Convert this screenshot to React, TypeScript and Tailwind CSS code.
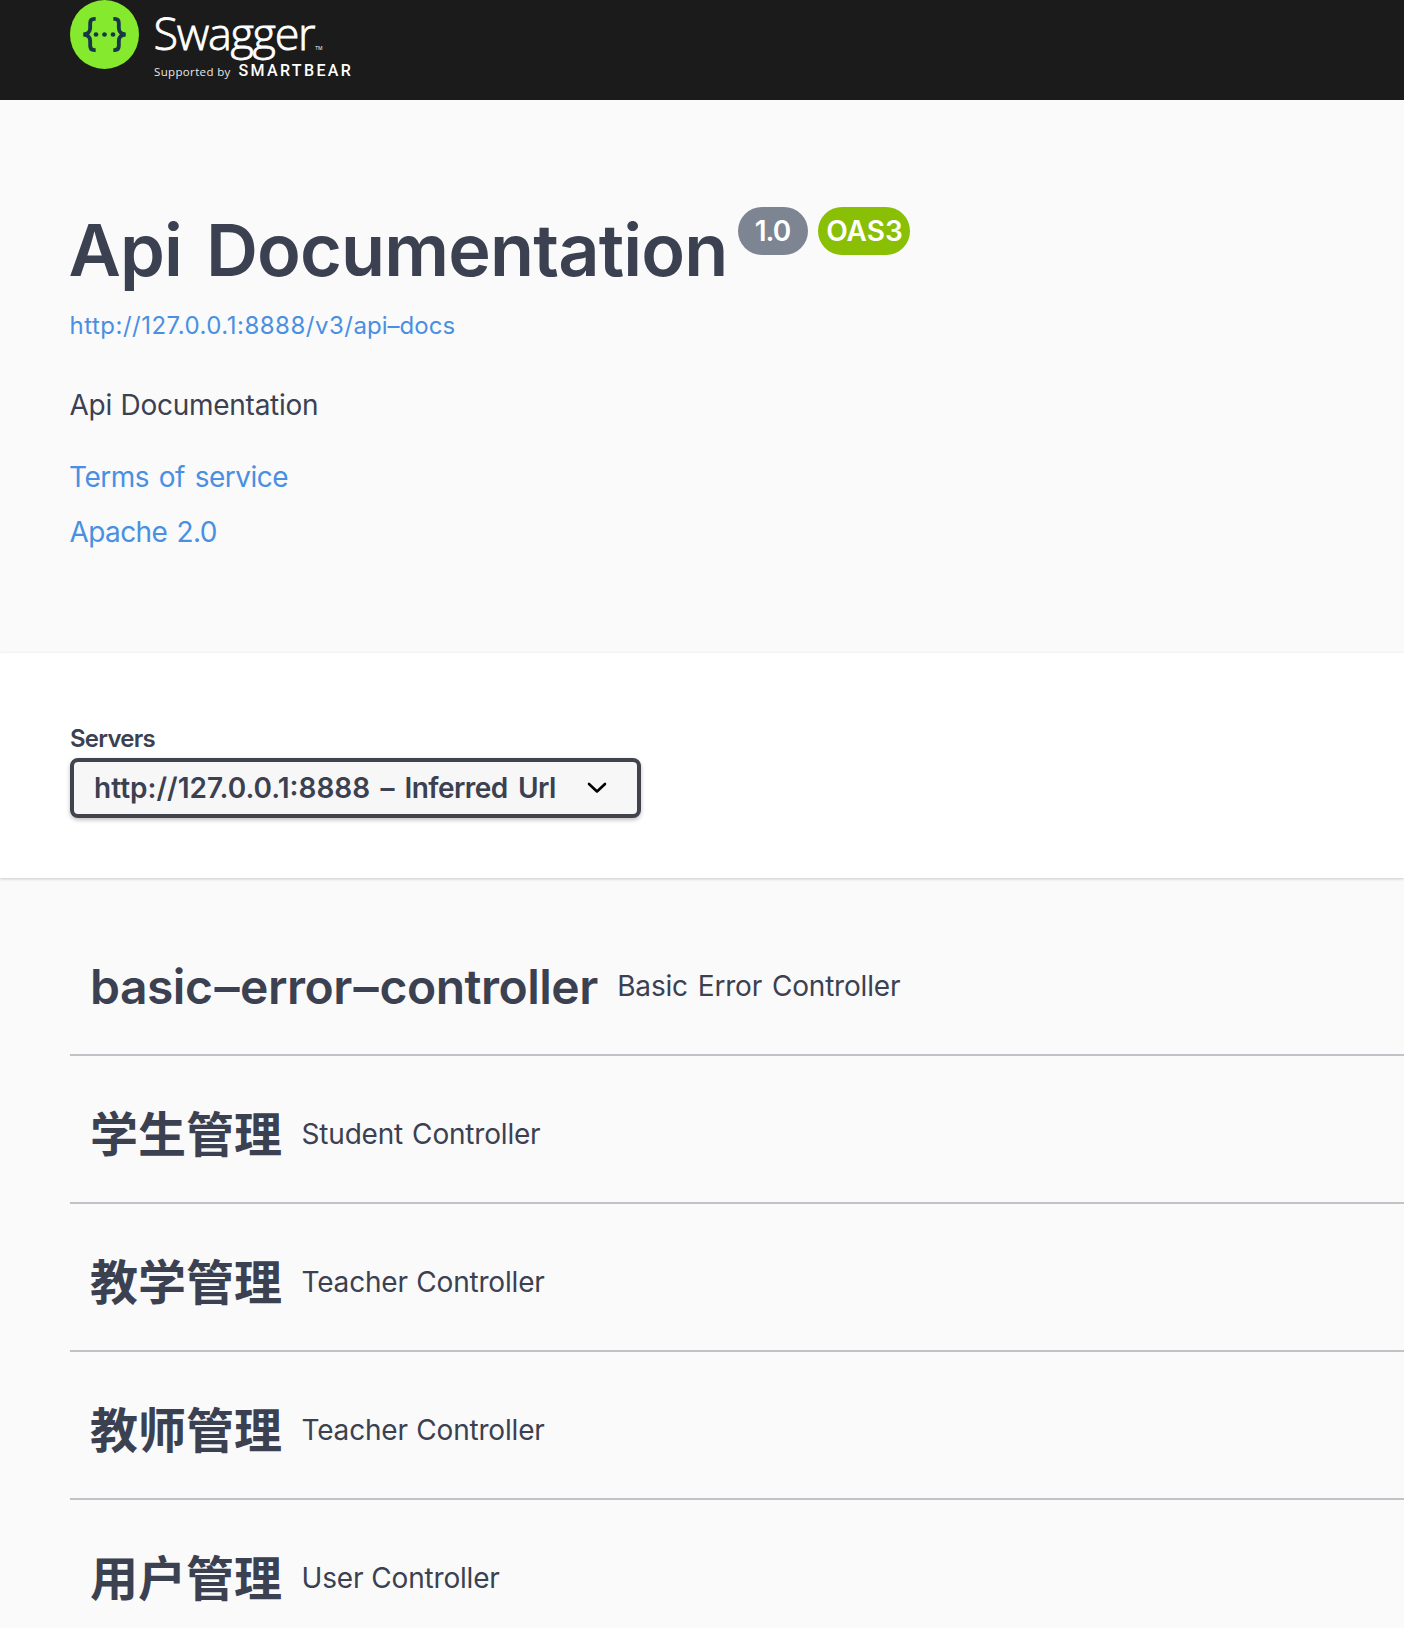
import React from "react";

const tags = [
  { name: "basic–error–controller", description: "Basic Error Controller", nameStyle: "pt-[2px] tracking-[-0.5px]", wordSpacing: "[word-spacing:2.2px]" },
  { name: "学生管理", description: "Student Controller", nameStyle: "pt-[1px]", wordSpacing: "[word-spacing:1.4px]" },
  { name: "教学管理", description: "Teacher Controller", nameStyle: "pt-[1px]", wordSpacing: "[word-spacing:0.8px]" },
  { name: "教师管理", description: "Teacher Controller", nameStyle: "pt-[1px]", wordSpacing: "[word-spacing:0.8px]" },
  { name: "用户管理", description: "User Controller", nameStyle: "pt-[1px]", wordSpacing: "[word-spacing:0.4px]" },
];

function TagName({ name }: { name: string }) {
  const parts = name.split("–");
  return (
    <>
      {parts.map((part, i) => (
        <React.Fragment key={part}>
          {i > 0 && <span className="mr-[1.9px] ml-[2.3px] inline-block scale-x-105">–</span>}
          {part}
        </React.Fragment>
      ))}
    </>
  );
}

function SwaggerMark() {
  return (
    <svg viewBox="15 0 207 207" className="h-[69px] w-[69px] shrink-0" fill="none" stroke="#173647" strokeWidth="11.5">
      <circle cx="118.5" cy="103.5" r="103.5" fill="#85ea2d" stroke="none" />
      <path d="M92 56.5h-4c-9 0-12.500 4-12.500 13v14c0 12-5 18-20 20c15 2 20 8 20 20v14c0 9 3.500 13 12.500 13h4" />
      <path d="M145 56.5h4c9 0 12.500 4 12.500 13v14c0 12 5 18 20 20c-15 2-20 8-20 20v14c0 9-3.500 13-12.500 13h-4" />
      <g fill="#173647" stroke="none">
        <circle cx="93" cy="103.500" r="7" />
        <circle cx="118.500" cy="103.500" r="7" />
        <circle cx="144" cy="103.500" r="7" />
      </g>
    </svg>
  );
}

function TopBar() {
  return (
    <header className="flex h-[100px] items-start bg-[#1b1b1b] pl-[70px] text-white">
      <SwaggerMark />
      <div className="ml-[14.5px] flex flex-col">
        <div className="flex h-[61px] items-baseline font-['Open_Sans',sans-serif]">
          <span className="text-[45px] leading-[66px] font-light tracking-[-1.3px] [-webkit-text-stroke:0.8px_white]">Swagger</span>
          <span className="ml-[1px] text-[5px] leading-none">TM</span>
        </div>
        <div className="flex h-5 items-baseline leading-5">
          <span className="w-[85px] pl-[0.5px] font-['Open_Sans',sans-serif] text-[11.5px] tracking-[0.35px] text-[#e8e8e8]">Supported by</span>
          <span className="font-[Roboto,sans-serif] text-[16px] font-medium tracking-[2.35px]">SMARTBEAR</span>
        </div>
      </div>
    </header>
  );
}

function Info() {
  return (
    <section className="flex h-[553px] flex-col items-start pt-[107px] pl-[70px] text-[28px] leading-9">
      <div className="flex items-start">
        <h1 className="mt-px -ml-[1.5px] text-[72px] leading-[84px] font-semibold tracking-[-0.85px] whitespace-nowrap [word-spacing:6.5px]">Api Documentation</h1>
        <div className="ml-[11px] flex gap-[10px] font-semibold text-white">
          <span className="flex h-12 w-[70px] items-center justify-center rounded-full bg-[#7d8492] pr-[2px] tracking-[-1px]">1.0</span>
          <span className="flex h-12 w-[92px] items-center justify-center rounded-full bg-[#89bf04]">OAS3</span>
        </div>
      </div>
      <a className="mt-[18px] -ml-[0.5px] text-2xl leading-8 tracking-[0.5px] text-[#4990e2]">http://127.0.0.1:8888/v3/<span className="tracking-[0.05px]">api–docs</span></a>
      <p className="mt-[45px] -ml-[0.5px] tracking-[-0.26px] [word-spacing:0.9px]">Api Documentation</p>
      <a className="mt-9 -ml-px tracking-[-0.5px] text-[#4990e2] [word-spacing:2.4px]">Terms of service</a>
      <a className="mt-[19px] -ml-[0.5px] tracking-[-0.6px] text-[#4990e2] [word-spacing:2px]">Apache 2.0</a>
    </section>
  );
}

function Servers() {
  return (
    <section className="flex h-[225px] flex-col items-start bg-white pt-[70px] pl-[70px] shadow-[0_1px_3px_rgba(0,0,0,0.2)]">
      <span className="text-2xl leading-8 font-semibold tracking-[-0.75px]">Servers</span>
      <button className="mt-[3px] flex h-[60px] w-[571px] items-center rounded-lg border-4 border-[#41444e] bg-[#f7f7f7] pl-5 text-left text-[28px] leading-9 font-semibold shadow-[0_2px_4px_rgba(0,0,0,0.25)]">
        <span className="whitespace-pre">http://127.0.0.1:8888<span className="tracking-[-0.55px] [word-spacing:3.9px]"> – Inferred Url</span></span>
        <svg viewBox="0 0 20 12" className="mr-[30px] ml-auto h-3 w-5" fill="none" stroke="black" strokeWidth="2.6" strokeLinecap="round" strokeLinejoin="round">
          <path d="M2 2l8 7.500l8-7.500" />
        </svg>
      </button>
    </section>
  );
}

export default function App() {
  return (
    <div className="h-[1628px] w-full overflow-hidden bg-[#fafafa] font-[Inter,'Noto_Sans_CJK_SC',sans-serif] text-[#3b4151]">
      <TopBar />
      <Info />
      <Servers />
      <main className="pt-[30px] pl-[70px]">
        {tags.map((tag) => (
          <div key={tag.name} className="flex h-[148px] items-center border-b-2 border-[#c1c1c8] pt-[10px] pl-5 whitespace-nowrap">
            <h2 className={`text-[48px] leading-[60px] font-semibold ${tag.nameStyle}`}>
              <TagName name={tag.name} />
            </h2>
            <span className={`ml-[19.5px] text-[28px] leading-9 tracking-[-0.19px] ${tag.wordSpacing}`}>{tag.description}</span>
          </div>
        ))}
      </main>
    </div>
  );
}
